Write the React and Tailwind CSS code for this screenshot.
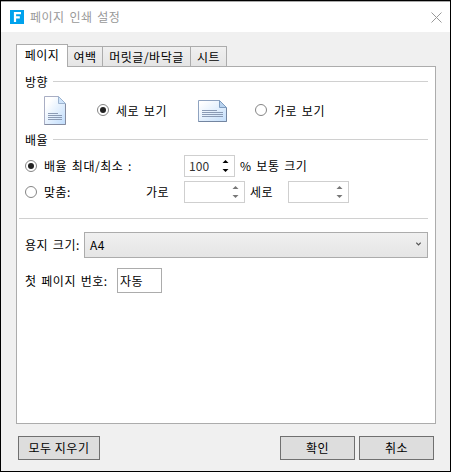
import { useState } from "react";
import clsx from "clsx";

const tabs = [
  { label: "페이지", width: "w-[35px]" },
  { label: "여백", width: "w-[35px]" },
  { label: "머릿글/바닥글", width: "w-[88px]" },
  { label: "시트", width: "w-9" },
];

function Radio({ checked, onClick, className }) {
  return (
    <button
      type="button"
      role="radio"
      aria-checked={checked}
      onClick={onClick}
      className={clsx(
        "flex h-3 w-3 shrink-0 items-center justify-center rounded-full border border-[#858585] bg-white",
        className
      )}
    >
      {checked && <span className="h-1.5 w-1.5 rounded-full bg-[#222]" />}
    </button>
  );
}

function Legend({ children }) {
  return (
    <div className="flex h-[29px] items-center pl-2 pr-[7px]">
      <span className="w-7">{children}</span>
      <span className="h-px flex-1 bg-[#d0d0d0]" />
    </div>
  );
}

function Spinner({ value, disabled, className }) {
  return (
    <div
      className={clsx(
        "flex h-[22px] items-center justify-between border border-[#cfcfcf] bg-white pl-1 pr-[5px]",
        className
      )}
    >
      <span className="tracking-[0.1px] text-[#333]">{value}</span>
      <svg width="7" height="12" viewBox="0 0 7 12" fill={disabled ? "#777" : "#000"}>
        <path d="M3.5 0 6.5 3H.5z" />
        <path d="M3.5 12 6.5 9H.5z" />
      </svg>
    </div>
  );
}

function PortraitIcon() {
  return (
    <svg width="22" height="29" viewBox="0 0 22 29" className="ml-[27px] shrink-0">
      <defs>
        <linearGradient id="portrait" x1="0" y1="0" x2="1" y2="1">
          <stop offset="0.2" stopColor="#fff" />
          <stop offset="1" stopColor="#bfdcfc" />
        </linearGradient>
      </defs>
      <path d="M.5.5h14l7 7v21H.5z" fill="url(#portrait)" stroke="#a9aec4" />
      <path d="M.5 28.5h21V8" fill="none" stroke="#858ca0" />
      <path d="M14.5.5v7h7z" fill="#cfe4fb" stroke="#9db4d0" />
      <path d="M4 17.5h10M4 19.5h14M4 21.5h14M4 23.5h14" stroke="#8b9bb5" />
    </svg>
  );
}

function LandscapeIcon() {
  return (
    <svg width="29" height="22" viewBox="0 0 29 22" className="mt-1 ml-8 shrink-0">
      <defs>
        <linearGradient id="landscape" x1="0" y1="0" x2="1" y2="1">
          <stop offset="0.1" stopColor="#fff" />
          <stop offset="1" stopColor="#c3defb" />
        </linearGradient>
      </defs>
      <path d="M.5.5h21l7 7v14H.5z" fill="url(#landscape)" stroke="#8fa3c0" />
      <path d="M.5 21.5h28V8" fill="none" stroke="#7385a0" />
      <path d="M21.5.5v7h7z" fill="#b9d3ef" stroke="#7f9dc0" />
      <path d="M4 10.5h15M4 12.5h21M4 14.5h21M4 16.5h21" stroke="#8b9bb5" />
    </svg>
  );
}

export default function App() {
  const [active, setActive] = useState("페이지");
  const [orientation, setOrientation] = useState("portrait");
  const [scaling, setScaling] = useState("adjust");

  return (
    <div className="flex h-[472px] w-[451px] flex-col overflow-hidden border border-black bg-[#f0f0f0] font-['Noto_Sans_CJK_KR',sans-serif] text-[12px] leading-4 tracking-[0.5px] whitespace-nowrap text-black [word-spacing:1.6px]">
      {/* Title bar */}
      <header className="flex h-[31px] shrink-0 items-center border-t border-[#aaa] bg-white pl-[9px] pr-2">
        <svg width="14" height="14" viewBox="0 0 14 14">
          <path d="M0 0h14v14H0z" fill="#00a2ed" />
          <path d="M5 12V3.2h6M5 7.3h4.8" fill="none" stroke="#fff" strokeWidth="2.2" />
        </svg>
        <h1 className="ml-1.5 flex-1 text-[#999]">페이지 인쇄 설정</h1>
        <svg width="11" height="11" viewBox="0 0 11 11" stroke="#999">
          <path d="m.5.5 10 10m0-10-10 10" />
        </svg>
      </header>

      {/* Tabs */}
      <nav className="ml-[15px] mt-3 flex h-[22px] shrink-0 items-end">
        {tabs.map((tab) => (
          <button
            key={tab.label}
            type="button"
            onClick={() => setActive(tab.label)}
            className={clsx(
              "flex items-center justify-center border-[#acacac]",
              active === tab.label
                ? "z-10 -mb-px h-[23px] w-[52px] border border-b-0 bg-white pb-0.5"
                : clsx("h-5 border-t border-r bg-linear-to-b from-[#f0f0f0] to-[#e5e5e5]", tab.width)
            )}
          >
            {tab.label}
          </button>
        ))}
      </nav>

      <main className="ml-[15px] h-[358px] w-[420px] shrink-0 border border-[#acacac] bg-white">
        <Legend>방향</Legend>
        <div className="flex h-[29px] items-start">
          <PortraitIcon />
          <Radio
            className="mt-2 ml-[31px]"
            checked={orientation === "portrait"}
            onClick={() => setOrientation("portrait")}
          />
          <span className="mt-[7px] ml-[7px] w-[50px]">세로 보기</span>
          <LandscapeIcon />
          <Radio
            className="mt-2 ml-7"
            checked={orientation === "landscape"}
            onClick={() => setOrientation("landscape")}
          />
          <span className="mt-[7px] ml-[7px]">가로 보기</span>
        </div>

        <Legend>배율</Legend>
        <div className="mt-px flex items-center pl-2">
          <Radio checked={scaling === "adjust"} onClick={() => setScaling("adjust")} />
          <span className="ml-[7px] w-[140px]">배율 최대/최소 :</span>
          <Spinner value="100" className="w-[51px]" />
          <span className="ml-[5px]">% 보통 크기</span>
        </div>
        <div className="mt-1 flex items-center pl-2">
          <Radio checked={scaling === "fit"} onClick={() => setScaling("fit")} />
          <span className="ml-[7px] w-[102px]">맞춤:</span>
          <span className="w-[38px]">가로</span>
          <Spinner disabled className="w-[61px]" />
          <span className="ml-[5px] w-[38px]">세로</span>
          <Spinner disabled className="w-[61px]" />
        </div>

        <hr className="mt-[15px] mr-[7px] ml-0.5 border-[#d0d0d0]" />

        <div className="mt-[13px] flex items-center pl-2">
          <span className="w-[59px]">용지 크기:</span>
          <button
            type="button"
            className="flex h-[26px] w-[344px] items-center justify-between border border-[#acacac] bg-linear-to-b from-[#f0f0f0] to-[#e5e5e5] pl-[5px] pr-1.5"
          >
            <span>A4</span>
            <svg width="5" height="4" viewBox="0 0 5 4" fill="none" stroke="#555" className="-mt-0.5">
              <path d="m.3.7 2.2 2.2L4.7.7" strokeWidth="1.2" />
            </svg>
          </button>
        </div>
        <div className="mt-2.5 flex items-center pl-2">
          <span className="w-[92px]">첫 페이지 번호:</span>
          <span className="flex h-[25px] w-[45px] items-center border border-[#acacac] pl-0.5">자동</span>
        </div>
      </main>

      {/* Footer buttons */}
      <footer className="mt-3 flex pl-[17px]">
        <button type="button" className="h-6 w-[82px] border border-[#707070] bg-[#ddd]">
          모두 지우기
        </button>
        <button type="button" className="ml-[180px] h-6 w-[75px] border border-[#707070] bg-[#ddd]">
          확인
        </button>
        <button type="button" className="ml-1 h-6 w-[75px] border border-[#707070] bg-[#ddd]">
          취소
        </button>
      </footer>
    </div>
  );
}
